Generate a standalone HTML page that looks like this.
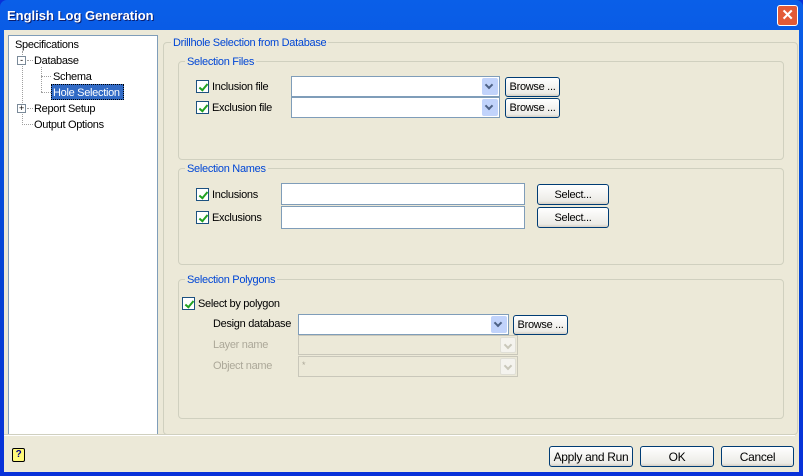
<!DOCTYPE html>
<html><head><style>
*{box-sizing:border-box;margin:0;padding:0}
body{width:803px;height:476px;overflow:hidden;font-family:Tahoma,"Liberation Sans",sans-serif;font-size:11px;letter-spacing:-0.3px;color:#000;background:#0831D9}
.a{position:absolute}
#win{position:absolute;left:0;top:0;width:803px;height:476px;background:linear-gradient(#0A5FE8,#0342D4 60%,#0831D9);border-radius:7px 7px 0 0}
#title{left:7px;top:8px;color:#fff;font-weight:bold;font-size:13px;letter-spacing:0;text-shadow:1px 1px #0A1E6F}
#close{left:777px;top:5px;width:21px;height:21px;background:#E35A36;border:1px solid #fff;border-radius:3px;color:#fff;font-weight:bold;font-size:15px;text-align:center;line-height:19px}
#body{left:4px;top:30px;width:795px;height:442px;background:#ECE9D8}
.grp{position:absolute;border:1px solid #D0D0BF;border-radius:4px}
.lg{position:absolute;color:#0046D5;background:#ECE9D8;padding:1px 2px 0;line-height:13px}
.cb{position:absolute;width:13px;height:13px;border:1px solid #1C5180;background:#fff}
.cb:after{content:"";position:absolute;left:4px;top:1px;width:3px;height:7px;border:solid #21A121;border-width:0 2px 2px 0;transform:rotate(40deg)}
.t{position:absolute;line-height:13px;padding-top:1px;white-space:nowrap}
.combo{position:absolute;background:#fff;border:1px solid #7F9DB9}
.combo .dd{position:absolute;right:1px;top:1px;bottom:1px;width:16px;background:#C1D3FB;border-radius:2px}
.combo .dd:after{content:"";position:absolute;left:4px;top:4px;width:4px;height:4px;border:solid #4D6185;border-width:0 2px 2px 0;transform:rotate(45deg)}
.combo.dis{background:#ECE9D8;border-color:#C9C7BA}
.combo.dis .dd{background:#F4F3EE;border:1px solid #E0DFD6}
.combo.dis .dd:after{border-color:#C9C7BA}
.btn{position:absolute;border:1px solid #003C74;border-radius:3px;background:linear-gradient(#fff,#ECEBE6 85%,#D6D0C5);text-align:center;white-space:nowrap;padding-top:1px}
.tb{position:absolute;background:#fff;border:1px solid #7F9DB9}
.dis-t{color:#ACA899}
</style></head><body>
<div id="win">
<div class="a" id="title">English Log Generation</div>
<div class="a" id="close">✕</div>
<div class="a" id="body"></div>
</div>
<!-- tree -->
<div class="a" style="left:8px;top:35px;width:150px;height:400px;background:#fff;border:1px solid #7F9DB9"></div>
<div class="t" style="left:15px;top:38px">Specifications</div>
<div class="a" style="left:22px;top:51px;height:72px;border-left:1px dotted #A0A0A0"></div>
<div class="a" style="left:17px;top:56px;width:9px;height:9px;border:1px solid #7A8A99;background:#fff;font-size:9px;line-height:6px;text-align:center">-</div>
<div class="a" style="left:27px;top:60px;width:6px;border-top:1px dotted #A0A0A0"></div>
<div class="t" style="left:34px;top:54px">Database</div>
<div class="a" style="left:41px;top:67px;height:25px;border-left:1px dotted #A0A0A0"></div>
<div class="a" style="left:41px;top:76px;width:10px;border-top:1px dotted #A0A0A0"></div>
<div class="a" style="left:41px;top:92px;width:10px;border-top:1px dotted #A0A0A0"></div>
<div class="t" style="left:53px;top:70px">Schema</div>
<div class="a" style="left:51px;top:84px;width:73px;height:16px;background:#316AC5;border:1px dotted #000"></div>
<div class="t" style="left:53px;top:86px;color:#fff">Hole Selection</div>
<div class="a" style="left:17px;top:104px;width:9px;height:9px;border:1px solid #7A8A99;background:#fff;font-size:9px;line-height:7px;text-align:center">+</div>
<div class="a" style="left:27px;top:108px;width:6px;border-top:1px dotted #A0A0A0"></div>
<div class="t" style="left:34px;top:102px">Report Setup</div>
<div class="a" style="left:22px;top:124px;width:11px;border-top:1px dotted #A0A0A0"></div>
<div class="t" style="left:34px;top:118px">Output Options</div>
<!-- outer group -->
<div class="grp" style="left:163px;top:42px;width:635px;height:393px"></div>
<div class="lg" style="left:171px;top:36px">Drillhole Selection from Database</div>
<!-- files -->
<div class="grp" style="left:178px;top:61px;width:606px;height:99px"></div>
<div class="lg" style="left:185px;top:55px">Selection Files</div>
<div class="cb" style="left:196px;top:80px"></div><div class="t" style="left:212px;top:80px">Inclusion file</div>
<div class="combo" style="left:291px;top:76px;width:209px;height:21px"><div class="dd"></div></div>
<div class="btn" style="left:505px;top:77px;width:55px;height:20px;line-height:17px">Browse ...</div>
<div class="cb" style="left:196px;top:101px"></div><div class="t" style="left:212px;top:101px">Exclusion file</div>
<div class="combo" style="left:291px;top:97px;width:209px;height:21px"><div class="dd"></div></div>
<div class="btn" style="left:505px;top:98px;width:55px;height:20px;line-height:17px">Browse ...</div>
<!-- names -->
<div class="grp" style="left:178px;top:168px;width:606px;height:97px"></div>
<div class="lg" style="left:185px;top:162px">Selection Names</div>
<div class="cb" style="left:196px;top:188px"></div><div class="t" style="left:212px;top:188px">Inclusions</div>
<div class="tb" style="left:281px;top:183px;width:244px;height:22px"></div>
<div class="btn" style="left:537px;top:184px;width:72px;height:21px;line-height:18px">Select...</div>
<div class="cb" style="left:196px;top:211px"></div><div class="t" style="left:212px;top:211px">Exclusions</div>
<div class="tb" style="left:281px;top:206px;width:244px;height:23px"></div>
<div class="btn" style="left:537px;top:207px;width:72px;height:21px;line-height:18px">Select...</div>
<!-- polygons -->
<div class="grp" style="left:178px;top:279px;width:606px;height:140px"></div>
<div class="lg" style="left:185px;top:273px">Selection Polygons</div>
<div class="cb" style="left:182px;top:297px"></div><div class="t" style="left:198px;top:297px">Select by polygon</div>
<div class="t" style="left:213px;top:317px">Design database</div>
<div class="combo" style="left:298px;top:314px;width:211px;height:21px"><div class="dd"></div></div>
<div class="btn" style="left:513px;top:315px;width:55px;height:20px;line-height:17px">Browse ...</div>
<div class="t dis-t" style="left:213px;top:338px">Layer name</div>
<div class="combo dis" style="left:298px;top:335px;width:220px;height:20px"><div class="dd"></div></div>
<div class="t dis-t" style="left:213px;top:359px">Object name</div>
<div class="combo dis" style="left:298px;top:356px;width:220px;height:21px"><div class="dd"></div><div class="t dis-t" style="left:3px;top:1px;font-size:9px">*</div></div>
<!-- bottom -->
<div class="a" style="left:4px;top:434px;width:791px;border-top:1px solid #D0D0BF;border-bottom:1px solid #fff"></div>
<div class="a" style="left:12px;top:448px;width:13px;height:14px;border:1px solid #000;border-radius:2px;background:#FFF97A;font-size:10px;font-weight:bold;color:#00008B;text-align:center;line-height:12px">?</div>
<div class="btn" style="left:549px;top:446px;width:84px;height:21px;line-height:18px;font-size:12px">Apply and Run</div>
<div class="btn" style="left:640px;top:446px;width:74px;height:21px;line-height:18px;font-size:12px">OK</div>
<div class="btn" style="left:721px;top:446px;width:73px;height:21px;line-height:18px;font-size:12px">Cancel</div>
</body></html>
